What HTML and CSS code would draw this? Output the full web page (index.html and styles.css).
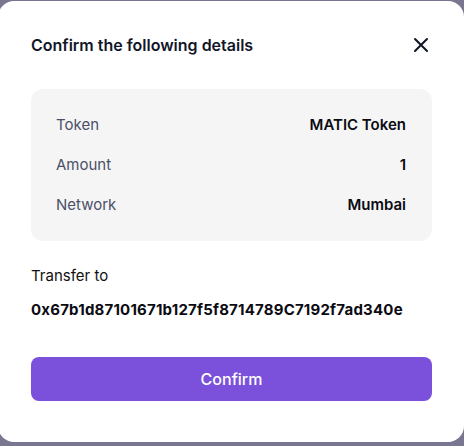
FILE: index.html
```html
<!DOCTYPE html>
<html lang="en">
<head>
    <meta charset="UTF-8">
    <meta name="viewport" content="width=device-width, initial-scale=1.0">
    <title>Confirm</title>
    <link rel="stylesheet" href="styles.css">
</head>
<body>
    <div class="modal">
        <div class="head">
            <h2>Confirm the following details</h2>
            <button class="close" aria-label="Close">
                <svg width="16" height="16" viewBox="0 0 16 16"><path d="M2 2L14 14M14 2L2 14" stroke="#0f1426" stroke-width="2" stroke-linecap="round"/></svg>
            </button>
        </div>
        <div class="details">
            <div class="row"><span class="label">Token</span><span class="value">MATIC Token</span></div>
            <div class="row"><span class="label">Amount</span><span class="value">1</span></div>
            <div class="row"><span class="label">Network</span><span class="value">Mumbai</span></div>
        </div>
        <div class="to">Transfer to</div>
        <div class="address">0x67b1d87101671b127f5f8714789C7192f7ad340e</div>
        <button class="confirm">Confirm</button>
    </div>
</body>
</html>
```

FILE: styles.css
```css
body {
    margin: 0;
    background: #787690;
    font-family: Inter, "Noto Sans", sans-serif;
    height: 446px;
    overflow: hidden;
}
.modal {
    box-sizing: border-box;
    width: 466px;
    height: 441px;
    margin: 1px 0 0 -2px;
    background: #fff;
    border-radius: 16px;
    padding: 32px 32px 0 33px;
}
.head {
    display: flex;
    justify-content: space-between;
    align-items: center;
    height: 24px;
}
.head h2 {
    margin: 0;
    font-size: 16px;
    font-weight: 600;
    color: #121629;
    letter-spacing: 0;
}
.close {
    border: 0;
    background: none;
    padding: 0;
    margin-right: 3px;
    display: flex;
}
.details {
    margin-top: 32px;
    background: #f5f5f6;
    border-radius: 12px;
    padding: 15px 26px 17px 25px;
}
.row {
    display: flex;
    justify-content: space-between;
    align-items: center;
    height: 40px;
    font-size: 15px;
}
.label {
    color: #4a5066;
}
.value {
    font-weight: 600;
    color: #0b0b12;
}
.to {
    margin-top: 25px;
    font-size: 15px;
    line-height: 20px;
    color: #111;
}
.address {
    margin-top: 14px;
    font-size: 15px;
    line-height: 20px;
    font-weight: 700;
    color: #0b0b12;
    letter-spacing: 0.2px;
}
.confirm {
    display: block;
    width: 100%;
    height: 44px;
    margin-top: 37px;
    border: 0;
    border-radius: 8px;
    background: #7b51db;
    color: #fff;
    font-family: inherit;
    font-size: 16px;
    font-weight: 500;
}
```
